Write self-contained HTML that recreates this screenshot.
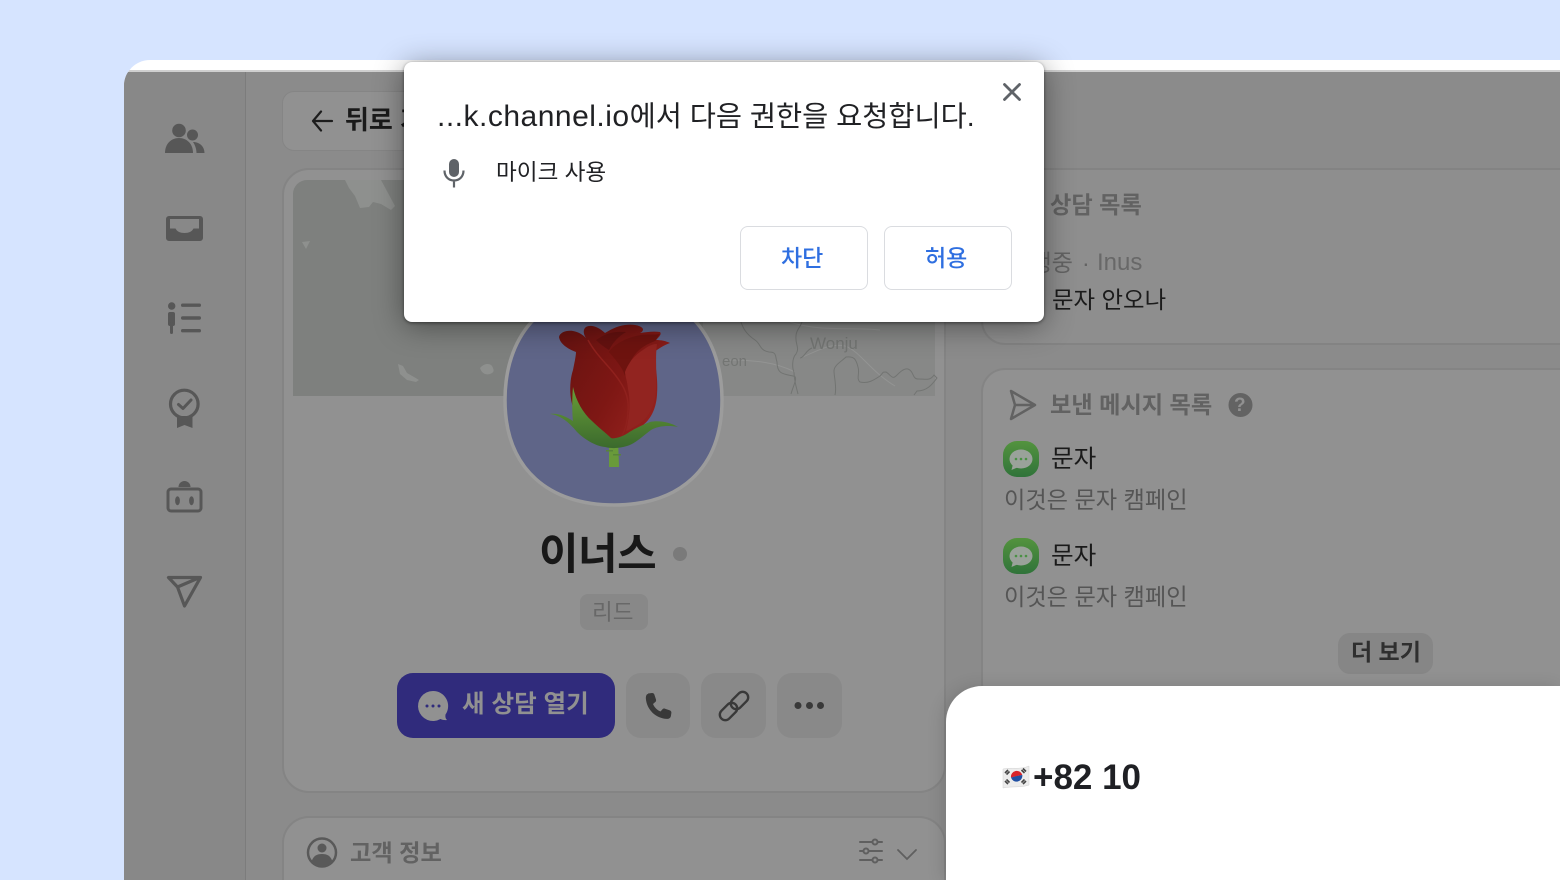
<!DOCTYPE html>
<html lang="ko">
<head>
<meta charset="utf-8">
<title>Screenshot</title>
<style>
html,body{margin:0;padding:0;width:1560px;height:880px;overflow:hidden;background:#d6e4ff}
body{position:relative;font-family:"Liberation Sans","Noto Sans CJK KR",sans-serif;color:#1d1d1f}
.a{position:absolute;box-sizing:border-box}
.t{position:absolute;white-space:nowrap;line-height:1}
.b{font-weight:700}
svg{position:absolute;left:0;top:0;width:1560px;height:880px;overflow:hidden}
</style>
</head>
<body>
<!-- window -->
<div class="a" style="left:124px;top:60px;width:1436px;height:820px;background:#fff;border-radius:26px 0 0 0;overflow:hidden">
  <div class="a" style="left:0;top:10px;width:1436px;height:2px;background:#cfcfcf"></div>
  <div class="a" style="left:0;top:12px;width:1436px;height:808px;background:#8b8b8b"></div>
  <div class="a" style="left:0;top:12px;width:122px;height:808px;background:#888888;border-right:1px solid #7c7c7c"></div>
</div>

<!-- sidebar icons -->
<svg width="1560" height="880">
  <g fill="#575757">
    <circle cx="179" cy="130.500" r="6.800"/>
    <circle cx="192.500" cy="135" r="5.500"/>
    <path d="M165 153c0-9 6-15 14-15s14 6 14 15z"/>
    <path d="M193 142c7 0 11.500 5 11.500 11h-8c0-4-1.500-8-3.500-11z"/>
    <path fill-rule="evenodd" d="M169 216h31a3 3 0 0 1 3 3v19a3 3 0 0 1-3 3h-31a3 3 0 0 1-3-3v-19a3 3 0 0 1 3-3zm1 3v9.500h5.500c1.500 3 4.500 4.500 9 4.500s7.500-1.500 9-4.500h5.500v-9.500z"/>
    <circle cx="171.700" cy="306" r="3.700"/>
    <rect x="168" y="312" width="7" height="14" rx="2"/>
    <rect x="170" y="322" width="3" height="12" rx="1.500"/>
    <rect x="181" y="303.500" width="20" height="3.400" rx="1.700"/>
    <rect x="181" y="316.300" width="20" height="3.400" rx="1.700"/>
    <rect x="181" y="329" width="20" height="3.400" rx="1.700"/>
    <path d="M177 416v12l7.500-3 8 3v-12z"/>
    <path d="M178.500 487a6 6 0 0 1 12 0z"/>
    <ellipse cx="177.500" cy="500.700" rx="2.400" ry="4.500"/>
    <ellipse cx="191.500" cy="500.700" rx="2.400" ry="4.500"/>
  </g>
  <g fill="none" stroke="#575757">
    <circle cx="184.300" cy="404" r="13.800" stroke-width="3.200"/>
    <path d="M178.500 404.500l4.500 4 8-8.500" stroke-width="3" stroke-linecap="round" stroke-linejoin="round"/>
    <rect x="168" y="489" width="33" height="22" rx="3" stroke-width="3"/>
    <path d="M168.500 577.500h32l-16 28.500-7-19zM177.500 587l21-9" stroke-width="3.200" stroke-linejoin="round" stroke-linecap="round"/>
  </g>
</svg>

<!-- back button -->
<div class="a" style="left:282px;top:91px;width:200px;height:60px;background:#919191;border:1px solid #858585;border-radius:12px"></div>
<svg width="1560" height="880">
  <path d="M332 121h-18M321 111.500l-8 9.500 8 9.500" fill="none" stroke="#1d1d1d" stroke-width="2.200" stroke-linecap="round" stroke-linejoin="round"/>
</svg>
<div class="t b" style="left:345px;top:107px;font-size:26px;color:#1a1a1a">뒤로 가기</div>

<!-- main card -->
<div class="a" style="left:282px;top:168px;width:664px;height:625px;background:#919191;border:2px solid #848484;border-radius:27px"></div>
<!-- map -->
<div class="a" style="left:293px;top:180px;width:642px;height:216px;background:#7e807e;border-radius:14px 0 0 0;overflow:hidden">
  <div class="a" style="left:410px;top:130px;width:232px;height:86px;background:#878887"></div>
</div>
<svg width="1560" height="880">
  <g fill="#8e908e">
    <path d="M345 180h36l14 26-4 4-10-6-8-2-4 5-9 1-5-12-6-8z"/>
    <path d="M302 242l8-1-4 8z"/>
    <path d="M398 364l5 2 4 7 7 4 5 3-3 2-9-2-7-6zM480 368c4-5 10-5 12-2 2 4 3 6-2 8-4 1-8 0-10-6z"/>
  </g>
  <g fill="none" stroke="#939493" stroke-width="1">
    <path d="M725 360c30 0 50 2 70 12M800 358c20-8 30-15 45-12 15 5 25 25 50 40M790 322c30 10 60 5 90 8"/>
  </g>
  <g fill="none" stroke="#727472" stroke-width="1">
    <path d="M741 322c2 6 5 12 14 18 6 4 4 10 14 12 8 0 6 4 8 10 0 12 6 12 16 14 6 0 0 10-2 18"/>
    <path d="M802 322c-2 6-6 8-6 14-1 8 4 12 0 18-4 4-4 14-2 18 0 8 2 14 4 22"/>
    <path d="M800 358c4 0 6-8 12-10"/>
    <path d="M835 395c2-8-1-18-1-24 0-6 8-10 12-14 8-1 10 2 12 10 2 6-2 12 2 15 8 2 14-2 20-6 4-4 2-4 6-4 4 2 6 8 10 4 4-4 8-8 12-7 6 2 4 10 10 10 8 0 12 2 16-4l3 3c-4 5-9 13-20 13l-3 4"/>
  </g>
</svg>
<div class="t" style="left:810px;top:335px;font-size:17px;color:#737573">Wonju</div>
<div class="t" style="left:722px;top:354px;font-size:15px;color:#737573">eon</div>

<!-- avatar -->
<svg width="1560" height="880">
  <path d="M505 400C505 470 550 505 614 505C678 505 722 470 722 400C722 340 690 290 614 290C538 290 505 340 505 400z" fill="#5f6588" stroke="#9c9c9c" stroke-width="3.500"/>
  <defs>
    <linearGradient id="rg" x1="0" y1="0" x2="1" y2="0.600">
      <stop offset="0" stop-color="#641210"/><stop offset=".6" stop-color="#7e1714"/><stop offset="1" stop-color="#95221e"/>
    </linearGradient>
    <linearGradient id="lg" x1="0" y1="0" x2="0" y2="1">
      <stop offset="0" stop-color="#699e38"/><stop offset="1" stop-color="#3b6a2d"/>
    </linearGradient>
  </defs>
  <path d="M609 438h9l1 29h-10z" fill="#699a3a"/>
  <path d="M606 450h7v1.500h-7zM613 454h8v1.500h-8z" fill="#58843a"/>
  <path d="M559 337c1-5 8-7 14-6 6 1 10 4 13 7-3-4-3-9 0-11 5-3 13 0 19 6 5-3 12-7 20-8 7-1 16 0 18 4 0 2-1 3-3 4 6-1 14-2 20-1 2 2-1 5-4 8 5 0 10 1 14 3-6 2-12 6-17 10 3 12 5 27 4 42-1 15-7 25-15 31-10 7-21 14-29 14-10-1-30-10-38-28-6-12-6-30-2-42 1-5 3-14 3-18-8-3-16-8-17-15z" fill="url(#rg)"/>
  <path d="M588 340c8 15 20 25 28 36 6 8 11 16 12 27 1 15-3 28-6 32" fill="none" stroke="#8f211d" stroke-width="1.500"/>
  <path d="M609 352c6-9 20-15 32-17 8-1 14 0 19-1-3 3-3 6-5 7-16 6-24 14-30 35-2-8-10-17-16-24z" fill="#6e130f"/>
  <path d="M596 340c8-5 14-9 30-8-7 4-13 10-17 18-5-3-10-7-13-10z" fill="#64110f"/>
  <path d="M640 352c6-4 10-8 17-8-2 14 0 30-1 46-1 18-9 30-20 36-6 3-6 4-10 5 3-12 5-28 2-42-1-9-3-14-3-17 3-8 8-15 15-20z" fill="#922420"/>
  <path d="M550 414c8-1 15 2 23 7-1-8-1-24 0-34 3 14 10 26 19 34 7 7 14 12 19 17 2 1 9 0 17-5 6-4 14-8 22-11 8-2 20 0 28 5-10-2-20-1-27 3-7 5-16 14-24 16-7 2-14 3-22 1-10-1-21-8-28-15-8-10-17-17-27-18z" fill="url(#lg)"/>
</svg>

<!-- name -->
<div class="t b" style="left:539px;top:534px;font-size:43px;letter-spacing:-.5px;color:#181818">이너스</div>
<div class="a" style="left:673px;top:547px;width:14px;height:14px;border-radius:50%;background:#7a7a7a"></div>
<div class="a" style="left:580px;top:594px;width:68px;height:36px;background:#888888;border-radius:8px"></div>
<div class="t" style="left:592px;top:602px;font-size:22.500px;color:#686868">리드</div>

<!-- actions -->
<div class="a" style="left:397px;top:673px;width:218px;height:65px;background:#302b7c;border-radius:16px"></div>
<div class="a" style="left:626px;top:673px;width:64px;height:65px;background:#898989;border-radius:15px"></div>
<div class="a" style="left:701px;top:673px;width:65px;height:65px;background:#898989;border-radius:15px"></div>
<div class="a" style="left:777px;top:673px;width:65px;height:65px;background:#898989;border-radius:15px"></div>
<svg width="1560" height="880">
  <path d="M433 691a15 15 0 1 0 7.500 28c2 1 4.500 1.300 6.500 1-1.500-1.500-1.800-3-1.500-5.500a15 15 0 0 0-12.500-23.500z" fill="#919191"/>
  <circle cx="427" cy="706" r="1.500" fill="#302b7c"/><circle cx="433" cy="706" r="1.500" fill="#302b7c"/><circle cx="439" cy="706" r="1.500" fill="#302b7c"/>
  <path d="M648 693.500l4-.5c1.500 0 2 .5 2.500 2l1.500 4.500c.3 1.200 0 2-1 2.800l-2 1.700c1.500 3.500 4 6 7.500 7.500l1.800-2c.8-1 1.700-1.200 2.800-.8l4.400 1.500c1.300.5 2 1.200 1.900 2.500l-.5 3.300c-.3 1.900-2 3-4 2.900-11-.5-20-9-21-20-.2-2.500.5-4.700 2.100-5z" fill="#393939"/>
  <g fill="none" stroke="#393939" stroke-width="2.400">
    <rect x="-10" y="-5.500" width="20" height="11" rx="5.500" transform="translate(739.500 700.500) rotate(-45)"/>
    <rect x="-10" y="-5.500" width="20" height="11" rx="5.500" transform="translate(728.500 711.500) rotate(-45)"/>
  </g>
  <circle cx="798" cy="705.500" r="3.500" fill="#393939"/><circle cx="809.500" cy="705.500" r="3.500" fill="#393939"/><circle cx="820.500" cy="705.500" r="3.500" fill="#393939"/>
</svg>
<div class="t b" style="left:462px;top:693px;font-size:24.600px;color:#919191">새 상담 열기</div>

<!-- customer info card -->
<div class="a" style="left:282px;top:816px;width:664px;height:64px;background:#919191;border:2px solid #848484;border-bottom:0;border-radius:27px 27px 0 0"></div>
<svg width="1560" height="880">
  <circle cx="322" cy="852.500" r="14" fill="none" stroke="#595959" stroke-width="2.500"/>
  <circle cx="322" cy="848" r="4.500" fill="#595959"/>
  <path d="M311.500 862c1.500-6 5-8 10.500-8s9 2 10.500 8c-3 3.500-6.500 5-10.500 5s-7.500-1.500-10.500-5z" fill="#595959"/>
  <g fill="none" stroke="#5f5f5f" stroke-width="2" stroke-linecap="round">
    <path d="M860 842h22M860 851h22M860 860h22"/>
    <circle cx="875" cy="842" r="2.500" fill="#919191"/><circle cx="866" cy="851" r="2.500" fill="#919191"/><circle cx="875" cy="860" r="2.500" fill="#919191"/>
    <path d="M898 850l9 9 9-9" stroke-width="1.800"/>
  </g>
</svg>
<div class="t b" style="left:350px;top:842px;font-size:23.200px;color:#626262">고객 정보</div>

<!-- right cards -->
<div class="a" style="left:981px;top:168px;width:579px;height:177px;background:#8e8e8e;border:2px solid #838383;border-right:0;border-radius:24px 0 0 24px"></div>
<div class="t b" style="left:1050px;top:194px;font-size:23.200px;color:#626262">상담 목록</div>
<div class="t" style="right:487px;top:252px;font-size:23.200px;color:#636363">진행중</div>
<div class="t" style="left:1082px;top:252px;font-size:23.200px;color:#636363">·</div>
<div class="t" style="left:1097px;top:251px;font-size:24px;color:#686868">Inus</div>
<div class="t" style="left:1052px;top:289px;font-size:23.400px;color:#1b1b1b">문자 안오나</div>

<div class="a" style="left:981px;top:368px;width:579px;height:340px;background:#919191;border:2px solid #848484;border-right:0;border-radius:24px 0 0 24px"></div>
<svg width="1560" height="880">
  <path d="M1011 391l24 14-24 14 4-14zM1015 405h20" fill="none" stroke="#626262" stroke-width="2.500" stroke-linejoin="round"/>
  <circle cx="1240.500" cy="405" r="12" fill="#636363"/>
  <defs><linearGradient id="gg" x1="0" y1="0" x2="0" y2="1"><stop offset="0" stop-color="#54933e"/><stop offset="1" stop-color="#30733a"/></linearGradient></defs>
  <rect x="1003" y="441" width="36" height="36" rx="14" fill="url(#gg)"/>
  <rect x="1003" y="538" width="36" height="36" rx="14" fill="url(#gg)"/>
  <g><ellipse cx="1021" cy="459" rx="11.500" ry="9.500" fill="#9aa29a"/><path d="M1013 464l-1.500 6 7-3z" fill="#9aa29a"/><circle cx="1016" cy="459" r="1.300" fill="#4a9144"/><circle cx="1021" cy="459" r="1.300" fill="#4a9144"/><circle cx="1026" cy="459" r="1.300" fill="#4a9144"/></g>
  <g><ellipse cx="1021" cy="556" rx="11.500" ry="9.500" fill="#9aa29a"/><path d="M1013 561l-1.500 6 7-3z" fill="#9aa29a"/><circle cx="1016" cy="556" r="1.300" fill="#4a9144"/><circle cx="1021" cy="556" r="1.300" fill="#4a9144"/><circle cx="1026" cy="556" r="1.300" fill="#4a9144"/></g>
</svg>
<div class="t b" style="left:1050px;top:394px;font-size:23.200px;color:#626262">보낸 메시지 목록</div>
<div class="t b" style="left:1234px;top:396px;font-size:19px;color:#919191">?</div>
<div class="t" style="left:1051px;top:448px;font-size:24.600px;color:#1a1a1a">문자</div>
<div class="t" style="left:1004px;top:489px;font-size:23.200px;color:#555555">이것은 문자 캠페인</div>
<div class="t" style="left:1051px;top:545px;font-size:24.600px;color:#1a1a1a">문자</div>
<div class="t" style="left:1004px;top:586px;font-size:23.200px;color:#555555">이것은 문자 캠페인</div>
<div class="a" style="left:1338px;top:633px;width:95px;height:41px;background:#868686;border-radius:12px"></div>
<div class="t b" style="left:1351px;top:641px;font-size:23px;color:#2f2f2f">더 보기</div>

<!-- white phone panel -->
<div class="a" style="left:946px;top:686px;width:614px;height:194px;background:#fff;border-radius:36px 0 0 0;box-shadow:-4px 0 16px rgba(0,0,0,.12)"></div>
<svg width="1560" height="880">
  <path d="M1003 769c9-2 17 1 26-3v19c-9 3-17 1-26 3z" fill="#ececec" stroke="#d2d2d2" stroke-width=".5"/>
  <path d="M1011 777.500a5.800 5.800 0 0 1 11.300-2.500z" fill="#d8232a"/>
  <path d="M1011 777.500a5.800 5.800 0 0 0 11.300-2.500l-5.500 1z" fill="#1f4fa3"/>
  <g stroke="#444" stroke-width="1.600">
    <path d="M1005 773l3-3M1006.500 774.500l3-3M1023 768.500l3 3M1021.500 770l3 3M1005 781l3 3M1006.500 779.500l3 3M1023 784l3-3M1021.500 782.500l3-3"/>
  </g>
</svg>
<div class="t b" style="left:1033px;top:760px;font-size:35px;color:#1f2024">+82 10</div>

<!-- dialog -->
<div class="a" style="left:404px;top:62px;width:640px;height:260px;background:#fff;border-radius:8px;box-shadow:0 1px 3px rgba(0,0,0,.45),0 4px 30px rgba(0,0,0,.42)"></div>
<svg width="1560" height="880">
  <path d="M1004.500 84.500l15 15M1019.500 84.500l-15 15" stroke="#5f6368" stroke-width="2.800" stroke-linecap="round"/>
  <rect x="449" y="159" width="10" height="18" rx="5" fill="#5f6368"/>
  <path d="M444.500 170.500c0 6 4 10 9.500 10s9.500-4 9.500-10M454 180.500v7" fill="none" stroke="#5f6368" stroke-width="2.200"/>
</svg>
<div class="t" style="left:437px;top:102px;font-size:28.400px;color:#202124"><span style="font-size:30px;letter-spacing:.5px">...k.channel.io</span>에서 다음 권한을 요청합니다.</div>
<div class="t" style="left:496px;top:162px;font-size:22.600px;color:#202124">마이크 사용</div>
<div class="a" style="left:740px;top:226px;width:128px;height:64px;border:1px solid #dadce0;border-radius:8px;background:#fff"></div>
<div class="a" style="left:884px;top:226px;width:128px;height:64px;border:1px solid #dadce0;border-radius:8px;background:#fff"></div>
<div class="t" style="left:781px;top:247px;font-size:23px;font-weight:500;color:#2f6fe0">차단</div>
<div class="t" style="left:925px;top:247px;font-size:23px;font-weight:500;color:#2f6fe0">허용</div>
</body>
</html>
